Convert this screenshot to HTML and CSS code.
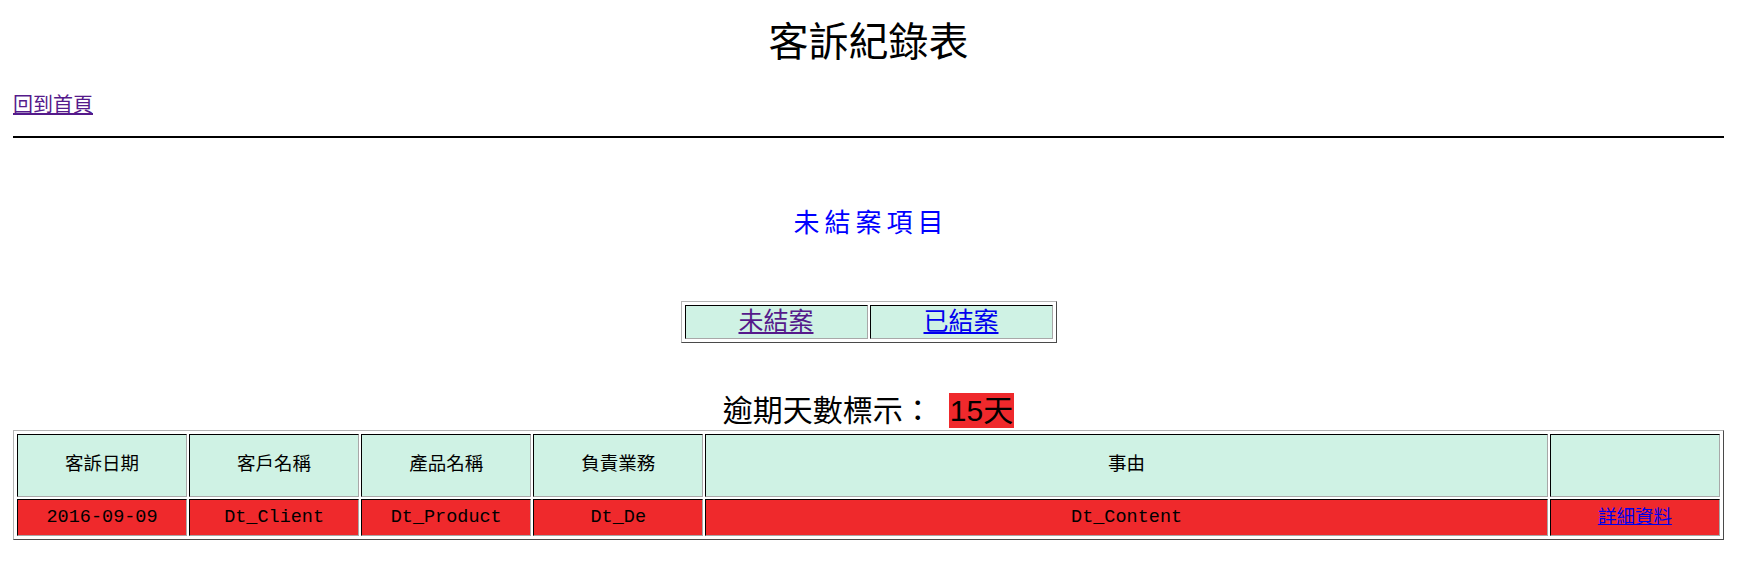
FILE: index.html
```html
<!DOCTYPE html>
<html lang="zh-Hant">
<head>
<meta charset="utf-8">
<title>客訴紀錄表</title>
<link rel="stylesheet" href="styles.css">
</head>
<body>
<div class="page">
  <h1 class="title">客訴紀錄表</h1>
  <p class="home"><a class="link visited" href="#">回到首頁</a></p>
  <hr class="rule">
  <h3 class="section">未結案項目</h3>
  <table class="grid tabs">
    <tr>
      <td class="tab"><a class="link visited" href="#">未結案</a></td>
      <td class="tab"><a class="link" href="#">已結案</a></td>
    </tr>
  </table>
  <div class="legend">逾期天數標示：<span class="badge">15天</span></div>
  <table class="grid list">
    <tr class="head">
      <td class="c10">客訴日期</td>
      <td class="c10">客戶名稱</td>
      <td class="c10">產品名稱</td>
      <td class="c10">負責業務</td>
      <td class="c50">事由</td>
      <td class="c10"></td>
    </tr>
    <tr class="row">
      <td>2016-09-09</td>
      <td>Dt_Client</td>
      <td>Dt_Product</td>
      <td>Dt_De</td>
      <td>Dt_Content</td>
      <td><a class="link detail" href="#">詳細資料</a></td>
    </tr>
  </table>
</div>
</body>
</html>
```

FILE: styles.css
```css
html, body {
  margin: 0;
  padding: 0;
  background: #ffffff;
}

.page {
  width: 1711px;
  margin-left: 13px;
  padding-top: 20px;
  font-family: "Liberation Serif", "Noto Sans CJK TC", serif;
  color: #000;
}

.title {
  margin: 0;
  font-size: 40px;
  line-height: 46px;
  font-weight: normal;
  text-align: center;
}

.home {
  margin: 27px 0 0 0;
  font-size: 20px;
  line-height: 24px;
}

.link {
  color: #0000ee;
  text-decoration: underline;
}

.link.visited {
  color: #551a8b;
}

.rule {
  margin: 19px 0 0 0;
  height: 2px;
  border: 0;
  background: #000;
}

.section {
  margin: 71px 0 0 0;
  font-size: 26px;
  line-height: 30px;
  font-weight: normal;
  color: #0000ff;
  letter-spacing: 5px;
  padding-left: 5px;
  text-align: center;
}

.grid {
  border-collapse: separate;
  border-spacing: 2px;
  padding: 1px;
  border-style: solid;
  border-width: 1px;
  border-color: #b4b4b4 #4a4a4a #4a4a4a #b4b4b4;
}

.grid td {
  border-style: solid;
  border-width: 1px;
  border-color: #000 #a8a8a8 #a8a8a8 #000;
  padding: 0;
  text-align: center;
}

.tabs {
  margin: 62px auto 0 auto;
  width: 376px;
  table-layout: fixed;
}

.tab {
  background: #cff2e4;
  height: 32px;
  font-size: 25px;
  line-height: 32px;
}

.legend {
  margin-top: 50px;
  height: 36px;
  font-size: 30px;
  line-height: 36px;
  text-align: center;
}

.badge {
  display: inline-block;
  vertical-align: top;
  margin-left: 16px;
  padding: 0 1px;
  height: 35px;
  line-height: 35px;
  background: #ef292c;
  font-family: "Liberation Sans", "Noto Sans CJK TC", sans-serif;
  font-size: 30px;
}

.list {
  margin-top: 1px;
  width: 100%;
  table-layout: fixed;
  font-family: "Liberation Mono", "Noto Sans CJK TC", monospace;
  font-size: 18.5px;
}

.c10 {
  width: 10%;
}

.c50 {
  width: 50%;
}

.head td {
  background: #cff2e4;
  height: 61px;
  line-height: 22px;
}

.row td {
  background: #ef292c;
  height: 35px;
  line-height: 22px;
}

.detail {
  font-family: "Liberation Serif", "Noto Sans CJK TC", serif;
}
```
